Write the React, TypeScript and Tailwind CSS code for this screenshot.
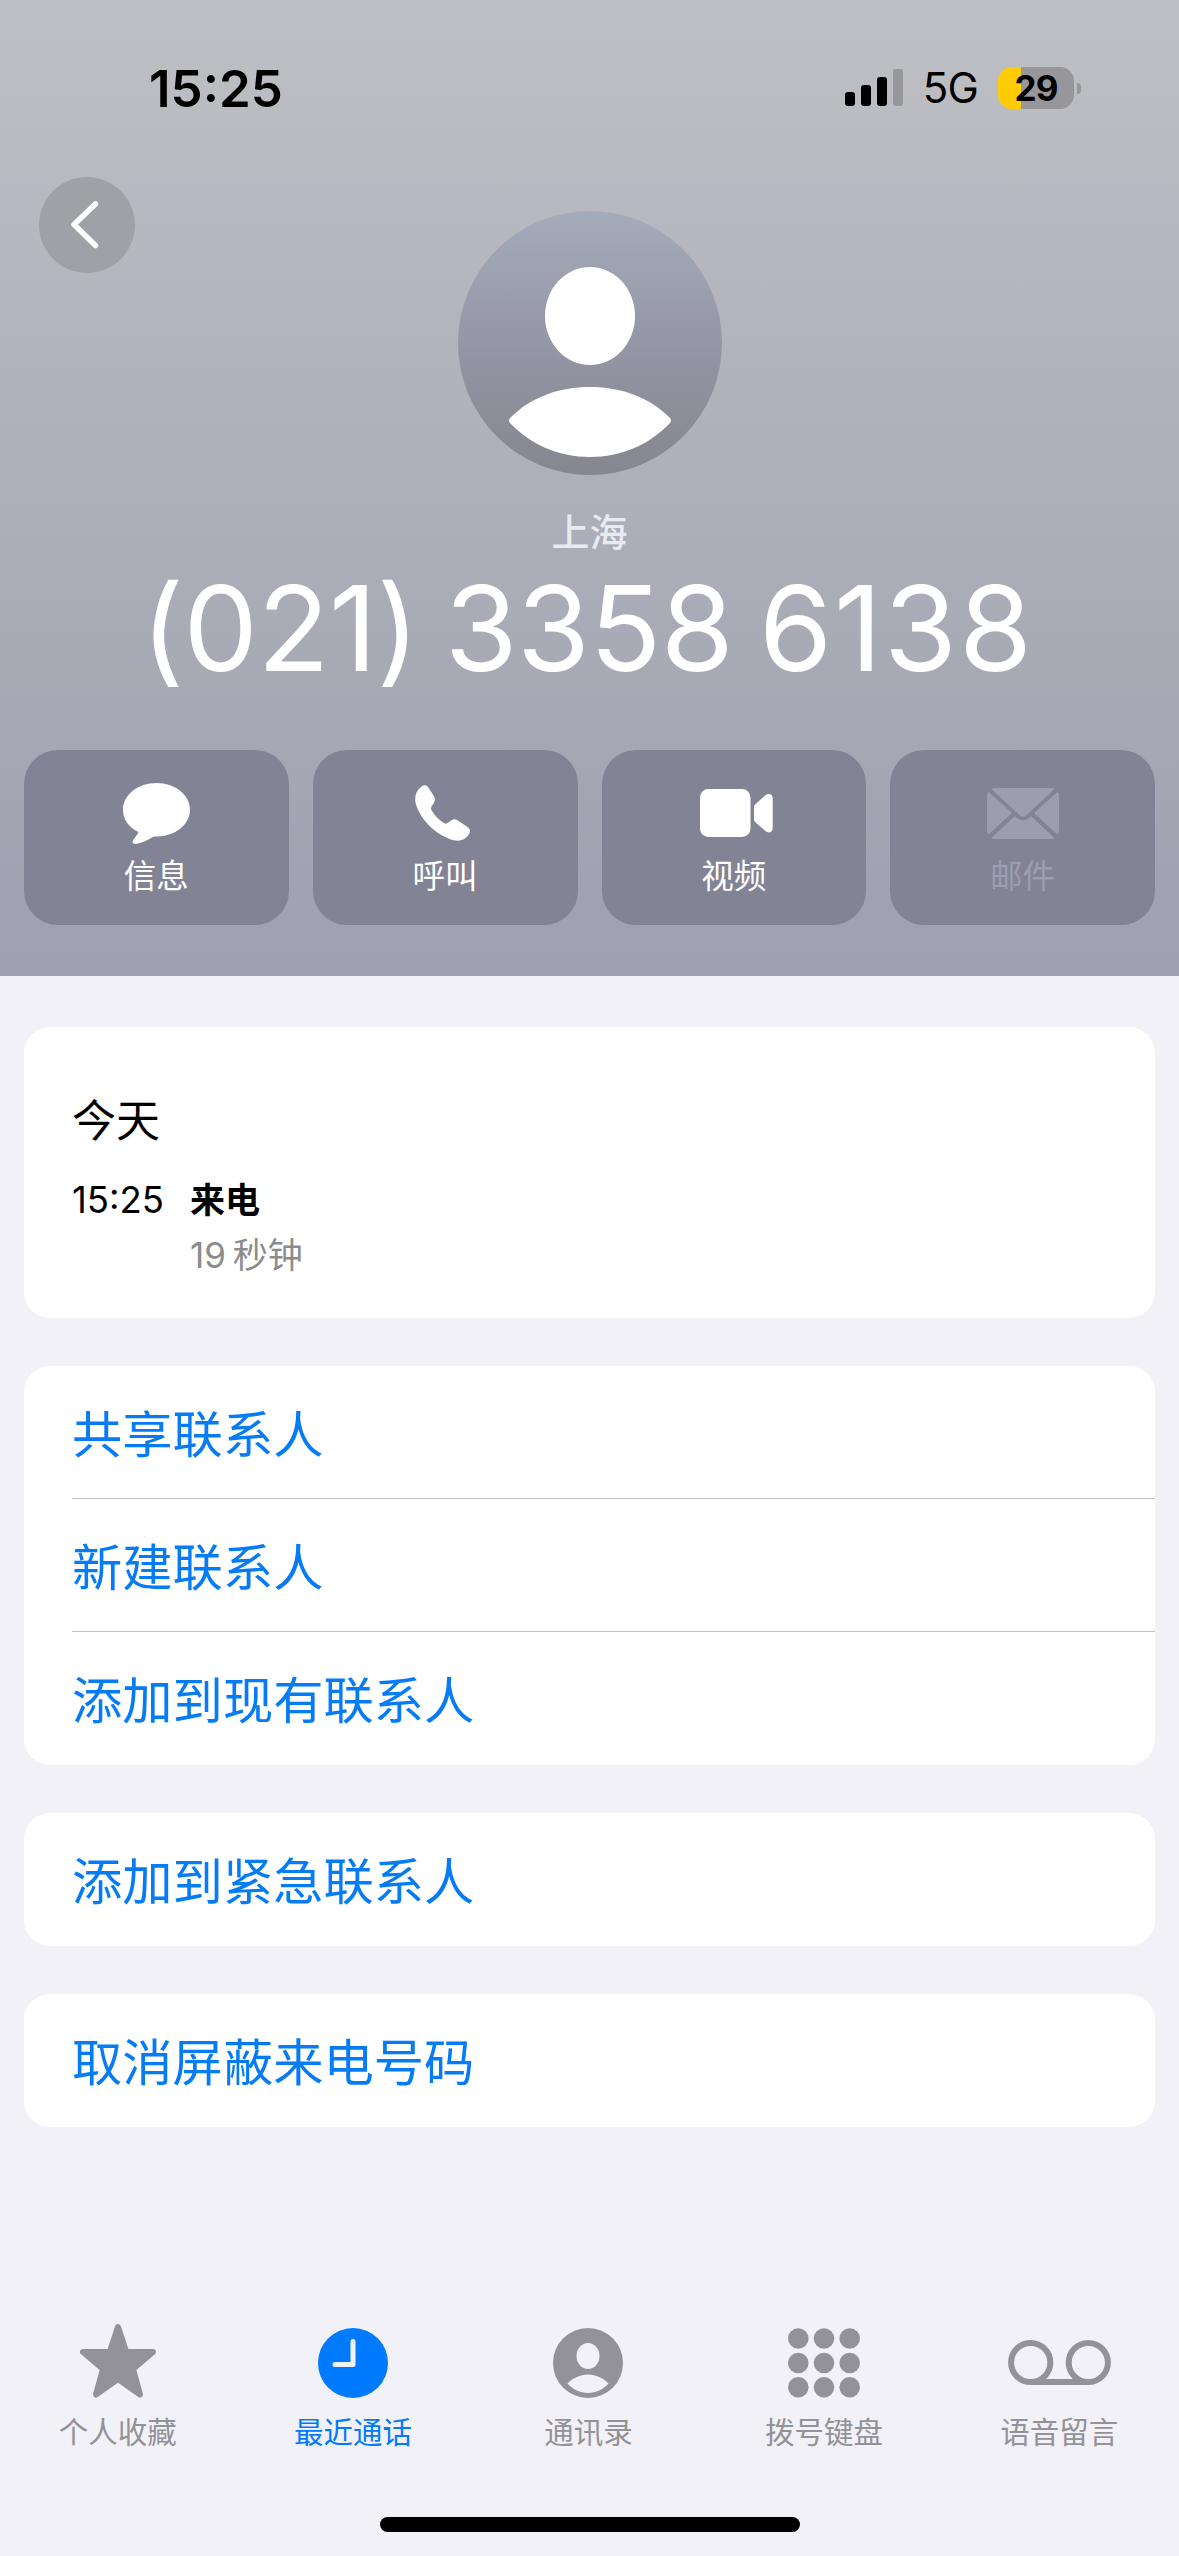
const actions = [
  {
    label: "信息",
    icon: (
      <svg width="67" height="61" viewBox="0 0 67 61" fill="currentColor">
        <path d="M33.500 0C52 0 67 11.900 67 26.700S52 53.400 34 53.400c-2 0-3.200 0-4.200.5-5 3.200-10.500 5.700-16.500 7-3 .6-4.800-1.500-3.200-4 2.200-2.700 4.200-5.400 5.400-8C6 44.500 0 36.500 0 26.700 0 11.900 15 0 33.500 0z" />
      </svg>
    ),
  },
  {
    label: "呼叫",
    icon: (
      <svg width="55" height="56" viewBox="0 0 55 56" fill="currentColor" className="-ml-1.5">
        <path d="M5.500 2.500C8-.3 11-.8 13 2l5.800 9c1.600 2.600 1.500 4.500 0 7l-2.200 3.600c-.7 1.300-.7 2.400 0 3.600 3 5.300 7.300 9.800 12.300 12.700 1.300.8 2.500.7 3.600 0l4-2.700c2-1.300 4-1.300 6 0l9.300 6.300c3.400 2.300 3.900 4.300 2.400 7.300-3.500 6-9.500 7.900-15.500 6.400C20.500 50.500 4 33 .5 17.500-.6 11 1.300 6 5.500 2.500z" />
      </svg>
    ),
  },
  {
    label: "视频",
    icon: (
      <svg width="73" height="49" viewBox="0 0 73 49" fill="currentColor" className="ml-1.5">
        <rect width="50.500" height="48" rx="8.500" />
        <path d="M54 18.500c0-1.500.5-2.600 1.600-3.600l9.900-8.600c1-.9 2.100-1.300 3.200-1.300 2.400 0 4 1.600 4 4.200v30c0 2.600-1.600 4.200-4 4.200-1.100 0-2.200-.4-3.200-1.300l-9.900-8.500c-1.100-1-1.600-2.100-1.600-3.600z" />
      </svg>
    ),
  },
  {
    label: "邮件",
    disabled: true,
    icon: (
      <svg width="72" height="51" viewBox="0 0 72 51" fill="currentColor">
        <path d="M4.500 1Q6 0 8 0h56q2 0 3.500 1L39 27.500q-3 2.400-6 0z" />
        <path d="M1.500 4L25 25 1.500 46.500Q0 45 0 42V8Q0 5.500 1.500 4z" />
        <path d="M70.500 4L47 25l23.500 21.500Q72 45 72 42V8q0-2.500-1.500-4z" />
        <path d="M4.500 50L28 28l2.800 2.500q5.200 4 10.400 0L44 28l23.500 22q-1.500 1-3.500 1H8q-2 0-3.500-1z" />
      </svg>
    ),
  },
];

const groups = [
  ["共享联系人", "新建联系人", "添加到现有联系人"],
  ["添加到紧急联系人"],
  ["取消屏蔽来电号码"],
];

const tabs = [
  {
    label: "个人收藏",
    icon: (
      <svg width="76" height="74" viewBox="0 0 76 74" fill="currentColor">
        <path
          d="M38 3l8.200 25H73L53 45 60 70.500 38 55 16 70.500 23 45 3 28h26.800z"
          stroke="currentColor"
          strokeWidth="6"
          strokeLinejoin="round"
        />
      </svg>
    ),
  },
  {
    label: "最近通话",
    active: true,
    icon: (
      <svg width="70" height="70" viewBox="0 0 70 70" fill="none">
        <circle cx="35" cy="35" r="35" fill="currentColor" />
        <path
          d="M35 13.500v23H17"
          stroke="#f2f1f7"
          strokeWidth="5"
          strokeLinecap="round"
          strokeLinejoin="round"
        />
      </svg>
    ),
  },
  {
    label: "通讯录",
    icon: (
      <svg width="70" height="70" viewBox="0 0 70 70">
        <circle cx="35" cy="35" r="35" fill="currentColor" />
        <ellipse cx="35" cy="28" rx="11.500" ry="13" fill="#f2f1f7" />
        <path
          d="M14.500 55.500C20 50 27 46.500 35 46.500S50 50 55.500 55.500C50 61.500 43 65 35 65s-15-3.500-20.500-9.500z"
          fill="#f2f1f7"
        />
      </svg>
    ),
  },
  {
    label: "拨号键盘",
    icon: (
      <svg width="72" height="70" viewBox="0 0 72 70" fill="currentColor">
        {[10.5, 35, 59.2].map((y) =>
          [10.3, 36, 61.7].map((x) => (
            <circle key={`${x}-${y}`} cx={x} cy={y} r="10.300" />
          ))
        )}
      </svg>
    ),
  },
  {
    label: "语音留言",
    icon: (
      <svg width="103" height="70" viewBox="0 0 103 70" fill="none">
        <g stroke="currentColor" strokeWidth="6">
          <circle cx="22.700" cy="34.500" r="19.600" />
          <circle cx="80.300" cy="34.500" r="19.600" />
          <path d="M22.700 54.100h57.600" />
        </g>
      </svg>
    ),
  },
];

const StatusBar = () => {
  return (
    <div className="flex h-[177px] items-start justify-between pl-[149px] pr-[98px] pt-[58px] text-black">
      <span className="text-[51px] font-semibold leading-[61px]">15:25</span>
      <div className="flex h-[60px] items-center">
        <svg width="58" height="38" viewBox="0 0 58 38" className="mr-[20px]">
          <rect x="0" y="23" width="10" height="14" rx="3" />
          <rect x="16" y="16" width="10" height="21" rx="3" />
          <rect x="32" y="8" width="10" height="29" rx="3" />
          <rect x="48" y="0" width="10" height="37" rx="3" fill="#97979b" />
        </svg>
        <span className="mr-[20px] text-[42px] leading-[62px] tracking-[-0.800px]">
          5G
        </span>
        <div className="flex h-[42px] w-[76px] items-center justify-center rounded-[14px] bg-linear-to-r from-[#fecb05] from-30% to-[#97979b] to-30% text-[35px] font-bold leading-none tracking-[-1px]">
          29
        </div>
        <div className="ml-[3px] h-[11px] w-1 rounded-r-full bg-[#97979b]" />
      </div>
    </div>
  );
};

const Header = () => {
  return (
    <header className="flex h-[976px] flex-col bg-linear-to-b from-[#bfc0c5] via-[#adafb9] to-[#9fa0b0]">
      <StatusBar />
      <div className="grid h-[298px] grid-cols-[1fr_264px_1fr]">
        <button className="ml-[39px] flex size-24 items-center justify-center rounded-full bg-[#a0a1a6]">
          <svg width="30" height="50" viewBox="0 0 30 50" fill="none" className="-ml-1.5">
            <path
              d="M26.500 4L5 24.500 26.500 45.500"
              stroke="white"
              strokeWidth="5.500"
              strokeLinecap="round"
              strokeLinejoin="round"
            />
          </svg>
        </button>
        <div className="mt-[34px] size-[264px] rounded-full bg-linear-to-b from-[#a4abba] via-[#9596a6] to-[#85868e]">
          <svg viewBox="0 0 264 264" fill="white">
            <ellipse cx="132" cy="105" rx="45" ry="49" />
            <path d="M52 207C73 186 101 176 132 176s59 10 80 31q2 2.500 0 5c-21 22-49 34-80 34s-59-12-80-34q-2-2.500 0-5z" />
          </svg>
        </div>
      </div>
      <p className="mt-[27px] text-center text-[38px] font-medium leading-[60px] text-[#e9eaf1]">
        上海
      </p>
      <h1 className="mt-px whitespace-nowrap pr-1 text-center text-[118px] leading-[130px] tracking-[-0.500px] [word-spacing:-7px] text-white">
        (021) 3358 <span className="tracking-[2px]">6138</span>
      </h1>
      <div className="mt-[57px] grid grid-cols-4 gap-6 px-6">
        {actions.map((action) => (
          <button
            key={action.label}
            className={`flex h-[175px] flex-col items-center rounded-[34px] bg-[#828394] pt-[29px] ${
              action.disabled ? "text-[#9c9dae]" : "text-white"
            }`}
          >
            <span className="flex h-[68px] items-center">{action.icon}</span>
            <span className="mt-0.5 text-[32.500px] leading-[56px]">
              {action.label}
            </span>
          </button>
        ))}
      </div>
    </header>
  );
};

const TabBar = () => {
  return (
    <nav className="grid w-[1177px] grid-cols-5">
      {tabs.map((tab) => (
        <div
          key={tab.label}
          className={`flex flex-col items-center ${
            tab.active ? "text-[#007aff]" : "text-[#929298]"
          }`}
        >
          <span className="flex h-[74px] items-end">{tab.icon}</span>
          <span className="mt-3 text-[29.500px] leading-[44px]">
            {tab.label}
          </span>
        </div>
      ))}
    </nav>
  );
};

const App = () => {
  return (
    <div className="flex h-[2556px] w-[1179px] flex-col overflow-hidden bg-[#f2f1f7] font-['Inter','Noto_Sans_CJK_SC',sans-serif]">
      <Header />
      <main className="flex h-[1348px] flex-col gap-12 px-6 pt-[51px]">
        <section className="h-[291px] rounded-[26px] bg-white px-12 pt-[64px]">
          <h2 className="text-[44px] leading-[60px] text-black">今天</h2>
          <div className="mt-[22px] grid grid-cols-[118px_1fr] text-[35px] leading-[55px]">
            <span className="text-[36.500px] text-black">15:25</span>
            <span className="font-bold text-black">来电</span>
            <span className="col-start-2 text-[#8c8c8c] [word-spacing:-3px]">
              19 秒钟
            </span>
          </div>
        </section>
        {groups.map((items) => (
          <section key={items[0]} className="rounded-[26px] bg-white pl-12">
            {items.map((item) => (
              <p
                key={item}
                className="h-[133px] border-[#c4c4c6] text-[50.300px] leading-[137px] text-[#057bf5] not-last:border-b"
              >
                {item}
              </p>
            ))}
          </section>
        ))}
      </main>
      <TabBar />
      <div className="mx-auto mt-[63px] h-[15px] w-[420px] rounded-full bg-black" />
    </div>
  );
};

export default App;
